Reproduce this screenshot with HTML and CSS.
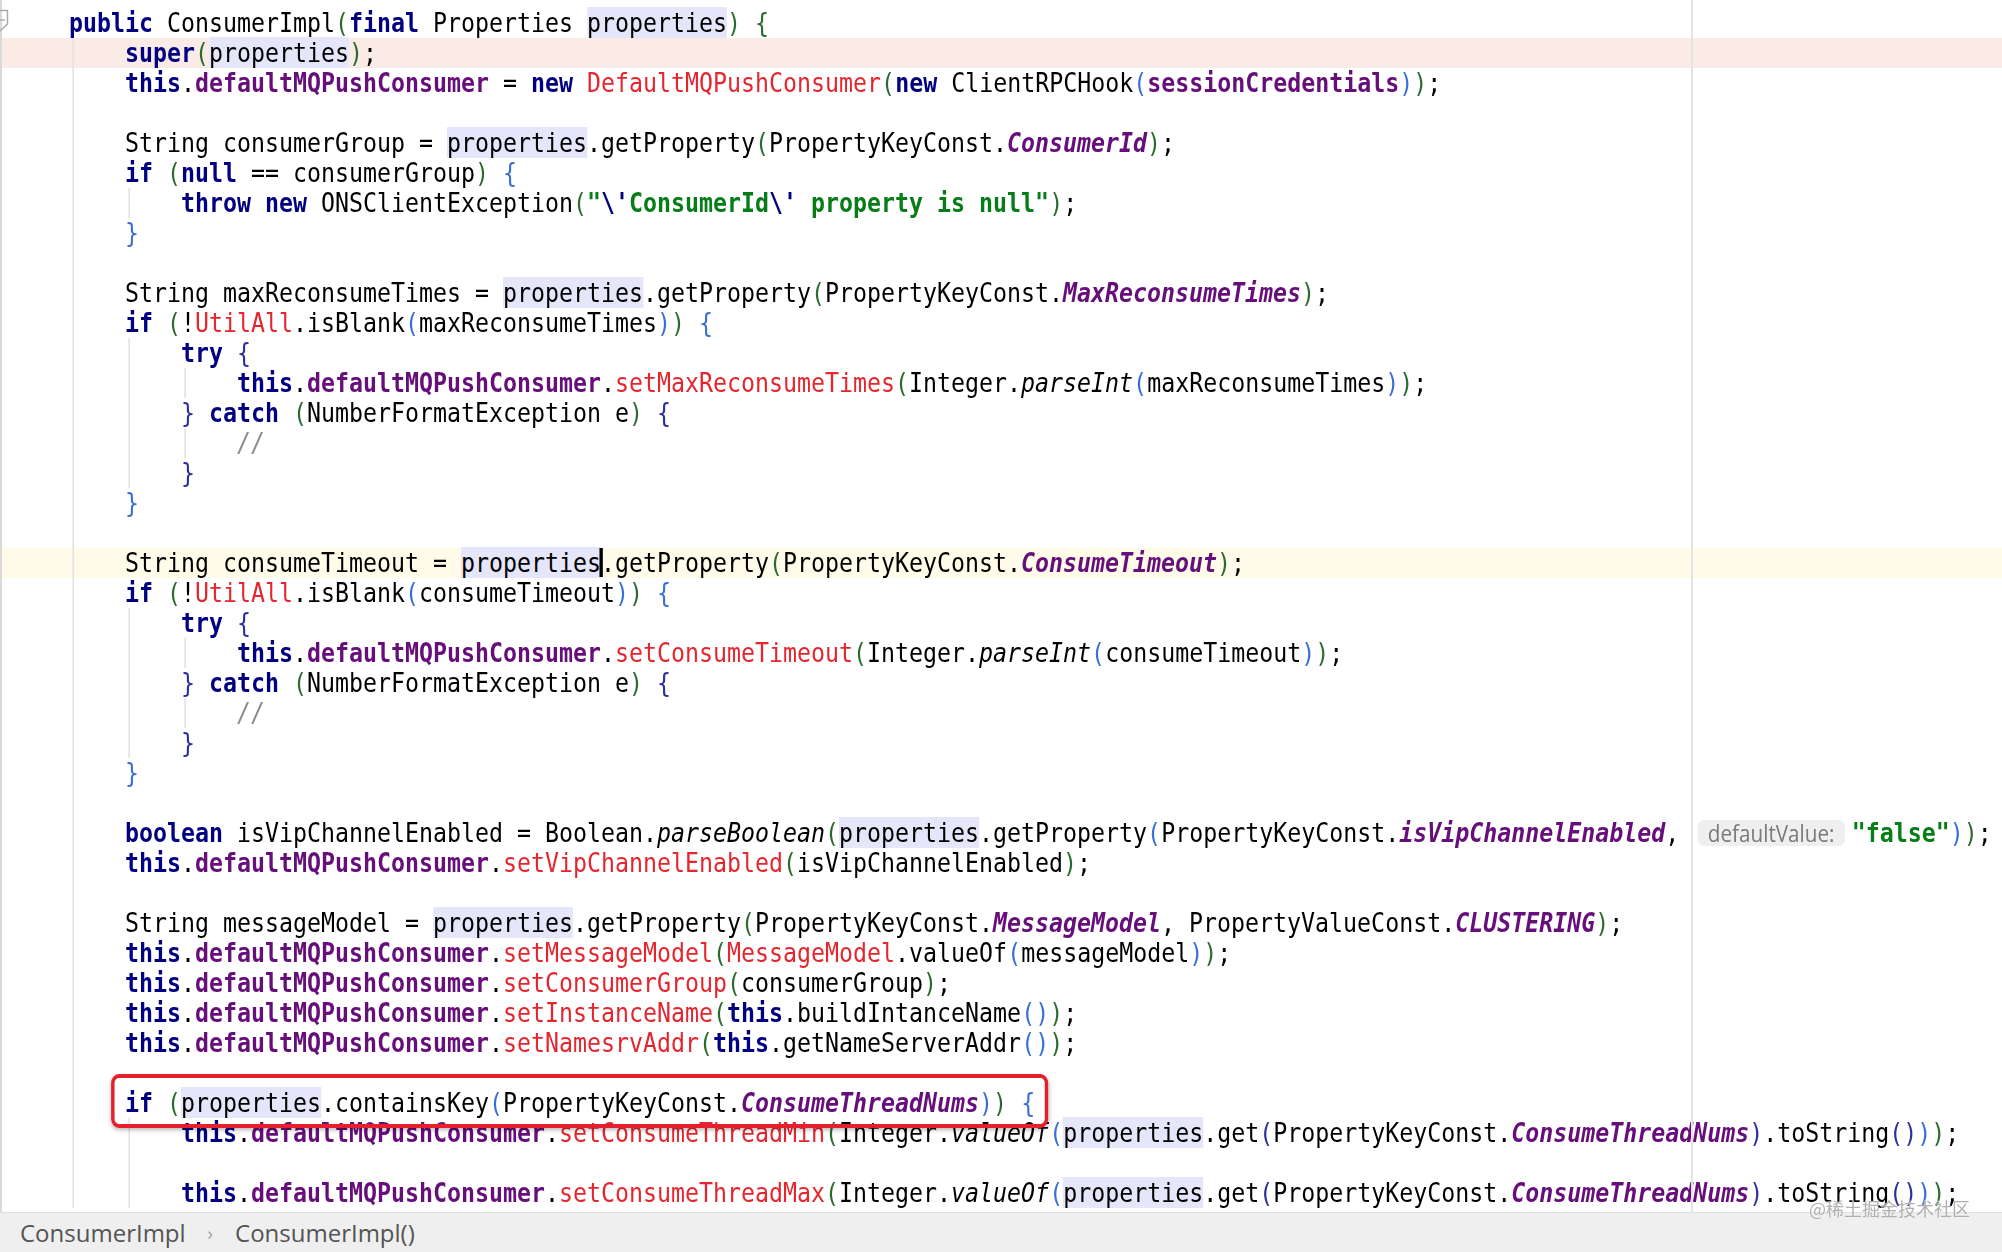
FILE: index.html
```html
<!DOCTYPE html>
<html lang="en">
<head>
<meta charset="utf-8">
<title>ConsumerImpl</title>
<link rel="stylesheet" href="styles.css">
</head>
<body>
<div class="page">
  <div class="editor">
    <svg class="fold" width="10" height="24" viewBox="0 0 10 24"><path d="M0 1.5 H7.5 V15 L0 22" fill="none" stroke="#a8a8a8" stroke-width="1.4"/><path d="M0 11 H5" stroke="#a8a8a8" stroke-width="1.4"/></svg>
    <div class="code">
<div class="ln">    <span class="k">public</span> ConsumerImpl<span class="a">(</span><span class="k">final</span> Properties <span class="u">properties</span><span class="a">)</span> <span class="a">{</span></div>
<div class="ln g1 pink">        <span class="k">super</span><span class="a">(</span><span class="u">properties</span><span class="a">)</span>;</div>
<div class="ln g1">        <span class="k">this</span>.<span class="f">defaultMQPushConsumer</span> = <span class="k">new</span> <span class="r">DefaultMQPushConsumer</span><span class="a">(</span><span class="k">new</span> ClientRPCHook<span class="b">(</span><span class="f">sessionCredentials</span><span class="b">)</span><span class="a">)</span>;</div>
<div class="ln g1"></div>
<div class="ln g1">        String consumerGroup = <span class="u">properties</span>.getProperty<span class="a">(</span>PropertyKeyConst.<span class="c">ConsumerId</span><span class="a">)</span>;</div>
<div class="ln g1">        <span class="k">if</span> <span class="a">(</span><span class="k">null</span> == consumerGroup<span class="a">)</span> <span class="b">{</span></div>
<div class="ln g2">            <span class="k">throw new</span> ONSClientException<span class="a">(</span><span class="s">"</span><span class="e">\'</span><span class="s">ConsumerId</span><span class="e">\'</span><span class="s"> property is null"</span><span class="a">)</span>;</div>
<div class="ln g1">        <span class="b">}</span></div>
<div class="ln g1"></div>
<div class="ln g1">        String maxReconsumeTimes = <span class="u">properties</span>.getProperty<span class="a">(</span>PropertyKeyConst.<span class="c">MaxReconsumeTimes</span><span class="a">)</span>;</div>
<div class="ln g1">        <span class="k">if</span> <span class="a">(</span>!<span class="r">UtilAll</span>.isBlank<span class="b">(</span>maxReconsumeTimes<span class="b">)</span><span class="a">)</span> <span class="b">{</span></div>
<div class="ln g2">            <span class="k">try</span> <span class="n">{</span></div>
<div class="ln g3">                <span class="k">this</span>.<span class="f">defaultMQPushConsumer</span>.<span class="r">setMaxReconsumeTimes</span><span class="a">(</span>Integer.<span class="it">parseInt</span><span class="b">(</span>maxReconsumeTimes<span class="b">)</span><span class="a">)</span>;</div>
<div class="ln g2">            <span class="n">}</span> <span class="k">catch</span> <span class="a">(</span>NumberFormatException e<span class="a">)</span> <span class="n">{</span></div>
<div class="ln g3">                <span class="cm">//</span></div>
<div class="ln g2">            <span class="n">}</span></div>
<div class="ln g1">        <span class="b">}</span></div>
<div class="ln g1"></div>
<div class="ln g1 cur">        String consumeTimeout = <span class="u caret">properties</span>.getProperty<span class="a">(</span>PropertyKeyConst.<span class="c">ConsumeTimeout</span><span class="a">)</span>;</div>
<div class="ln g1">        <span class="k">if</span> <span class="a">(</span>!<span class="r">UtilAll</span>.isBlank<span class="b">(</span>consumeTimeout<span class="b">)</span><span class="a">)</span> <span class="b">{</span></div>
<div class="ln g2">            <span class="k">try</span> <span class="n">{</span></div>
<div class="ln g3">                <span class="k">this</span>.<span class="f">defaultMQPushConsumer</span>.<span class="r">setConsumeTimeout</span><span class="a">(</span>Integer.<span class="it">parseInt</span><span class="b">(</span>consumeTimeout<span class="b">)</span><span class="a">)</span>;</div>
<div class="ln g2">            <span class="n">}</span> <span class="k">catch</span> <span class="a">(</span>NumberFormatException e<span class="a">)</span> <span class="n">{</span></div>
<div class="ln g3">                <span class="cm">//</span></div>
<div class="ln g2">            <span class="n">}</span></div>
<div class="ln g1">        <span class="b">}</span></div>
<div class="ln g1"></div>
<div class="ln g1">        <span class="k">boolean</span> isVipChannelEnabled = Boolean.<span class="it">parseBoolean</span><span class="a">(</span><span class="u">properties</span>.getProperty<span class="b">(</span>PropertyKeyConst.<span class="c">isVipChannelEnabled</span>, <span class="hint">defaultValue:</span><span class="s">"false"</span><span class="b">)</span><span class="a">)</span>;</div>
<div class="ln g1">        <span class="k">this</span>.<span class="f">defaultMQPushConsumer</span>.<span class="r">setVipChannelEnabled</span><span class="a">(</span>isVipChannelEnabled<span class="a">)</span>;</div>
<div class="ln g1"></div>
<div class="ln g1">        String messageModel = <span class="u">properties</span>.getProperty<span class="a">(</span>PropertyKeyConst.<span class="c">MessageModel</span>, PropertyValueConst.<span class="c">CLUSTERING</span><span class="a">)</span>;</div>
<div class="ln g1">        <span class="k">this</span>.<span class="f">defaultMQPushConsumer</span>.<span class="r">setMessageModel</span><span class="a">(</span><span class="r">MessageModel</span>.valueOf<span class="b">(</span>messageModel<span class="b">)</span><span class="a">)</span>;</div>
<div class="ln g1">        <span class="k">this</span>.<span class="f">defaultMQPushConsumer</span>.<span class="r">setConsumerGroup</span><span class="a">(</span>consumerGroup<span class="a">)</span>;</div>
<div class="ln g1">        <span class="k">this</span>.<span class="f">defaultMQPushConsumer</span>.<span class="r">setInstanceName</span><span class="a">(</span><span class="k">this</span>.buildIntanceName<span class="b">()</span><span class="a">)</span>;</div>
<div class="ln g1">        <span class="k">this</span>.<span class="f">defaultMQPushConsumer</span>.<span class="r">setNamesrvAddr</span><span class="a">(</span><span class="k">this</span>.getNameServerAddr<span class="b">()</span><span class="a">)</span>;</div>
<div class="ln g1"></div>
<div class="ln g1">        <span class="k">if</span> <span class="a">(</span><span class="u">properties</span>.containsKey<span class="b">(</span>PropertyKeyConst.<span class="c">ConsumeThreadNums</span><span class="b">)</span><span class="a">)</span> <span class="b">{</span><span class="mark"></span></div>
<div class="ln g2">            <span class="k">this</span>.<span class="f">defaultMQPushConsumer</span>.<span class="r">setConsumeThreadMin</span><span class="a">(</span>Integer.<span class="it">valueOf</span><span class="b">(</span><span class="u">properties</span>.get<span class="n">(</span>PropertyKeyConst.<span class="c">ConsumeThreadNums</span><span class="n">)</span>.toString<span class="n">()</span><span class="b">)</span><span class="a">)</span>;</div>
<div class="ln g2"></div>
<div class="ln g2">            <span class="k">this</span>.<span class="f">defaultMQPushConsumer</span>.<span class="r">setConsumeThreadMax</span><span class="a">(</span>Integer.<span class="it">valueOf</span><span class="b">(</span><span class="u">properties</span>.get<span class="n">(</span>PropertyKeyConst.<span class="c">ConsumeThreadNums</span><span class="n">)</span>.toString<span class="n">()</span><span class="b">)</span><span class="a">)</span>;</div>
    </div>
    <div class="margin-line"></div>
  </div>
  <div class="status">
    <span class="crumb">ConsumerImpl</span>
    <span class="sep">›</span>
    <span class="crumb">ConsumerImpl()</span>
  </div>
  <div class="watermark">@稀土掘金技术社区</div>
</div>
</body>
</html>
```

FILE: styles.css
```css
html, body {
  margin: 0;
  padding: 0;
  background: #ffffff;
}

.page {
  position: relative;
  width: 2002px;
  height: 1252px;
  overflow: hidden;
  display: flex;
  flex-direction: column;
}

.editor {
  position: relative;
  height: 1212px;
  flex: none;
  overflow: hidden;
  background: #ffffff;
}

.editor::before {
  content: "";
  position: absolute;
  left: 0;
  top: 0;
  bottom: 0;
  width: 2px;
  background: #d9d9d9;
  z-index: 4;
}

.fold {
  position: absolute;
  left: 0;
  top: 9px;
  z-index: 5;
}

.margin-line {
  position: absolute;
  left: 1691px;
  top: 0;
  bottom: 0;
  width: 2px;
  background: #e4e4e4;
  z-index: 1;
}

.code {
  width: 2325px;
  padding-top: 8px;
  transform: scaleX(0.8613);
  transform-origin: 0 0;
  font-family: "DejaVu Sans Mono", monospace;
  font-size: 27px;
  color: #000000;
}

.ln {
  position: relative;
  height: 30px;
  line-height: 30px;
  padding-left: 15.1px;
  white-space: pre;
  background-repeat: no-repeat;
}

.g1 {
  background-image: linear-gradient(#e4e4e4, #e4e4e4);
  background-position: 83.6px 0;
  background-size: 2.3px 100%;
}

.g2 {
  background-image: linear-gradient(#e4e4e4, #e4e4e4), linear-gradient(#e4e4e4, #e4e4e4);
  background-position: 83.6px 0, 148.6px 0;
  background-size: 2.3px 100%, 2.3px 100%;
}

.g3 {
  background-image: linear-gradient(#e4e4e4, #e4e4e4), linear-gradient(#e4e4e4, #e4e4e4), linear-gradient(#e4e4e4, #e4e4e4);
  background-position: 83.6px 0, 148.6px 0, 213.6px 0;
  background-size: 2.3px 100%, 2.3px 100%, 2.3px 100%;
}

.pink { background-color: #faebe7; }
.cur { background-color: #fefbe9; }

.k { color: #000080; font-weight: bold; }
.f { color: #660e7a; font-weight: bold; }
.c { color: #660e7a; font-weight: bold; font-style: italic; }
.r { color: #e5262e; }
.it { font-style: italic; }
.s { color: #067d17; font-weight: bold; }
.e { color: #000080; font-weight: bold; }
.cm { color: #8c8c8c; font-style: italic; }
.a { color: #2b6b2f; }
.b { color: #3c6fd6; }
.n { color: #2e2e9e; }
.u { background-color: #e6e6fa; }

.caret { position: relative; }
.caret::after {
  content: "";
  position: absolute;
  right: -2px;
  top: 1px;
  bottom: 1px;
  width: 3.5px;
  background: #000000;
}

.hint {
  display: inline-block;
  height: 26px;
  line-height: 26px;
  padding: 0 12px;
  margin: 0 8px 0 5px;
  border-radius: 7px;
  background: #efefef;
  color: #7a7a7a;
  font-family: "Open Sans", "Liberation Sans", sans-serif;
  font-size: 24px;
  font-weight: normal;
  font-style: normal;
}

.mark {
  position: absolute;
  left: 128.9px;
  top: -14px;
  width: 1088px;
  height: 54px;
  box-sizing: border-box;
  border: 4.5px solid #e3202b;
  border-radius: 9px;
  box-shadow: 0 2px 5px rgba(0, 0, 0, 0.28);
  z-index: 3;
}

.status {
  flex: 1;
  display: flex;
  align-items: center;
  gap: 22px;
  padding-left: 20px;
  background: #efefef;
  border-top: 1px solid #e2e2e2;
  font-family: "Open Sans", "Liberation Sans", sans-serif;
  font-size: 24px;
  color: #545454;
}

.sep {
  color: #a0a0a0;
  font-size: 18px;
}

.watermark {
  position: absolute;
  right: 32px;
  top: 1197px;
  font-family: "Noto Sans CJK SC", sans-serif;
  font-size: 18px;
  line-height: 22px;
  color: rgba(150, 150, 150, 0.75);
  text-shadow: 0 0 1px #ffffff;
  z-index: 6;
}
```
